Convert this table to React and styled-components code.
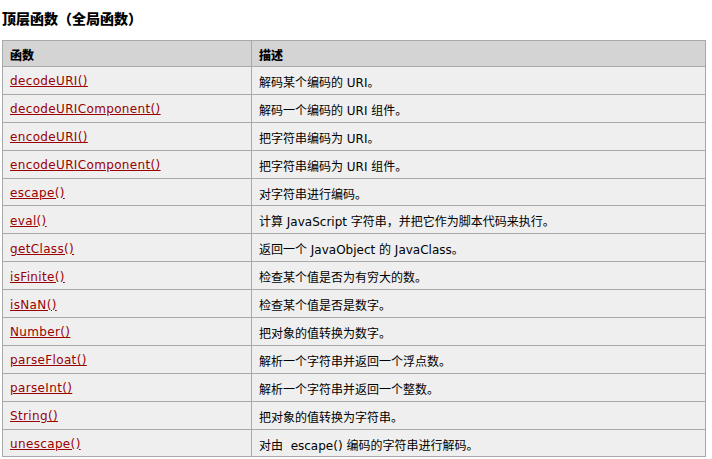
import React from "react";
import styled, { createGlobalStyle } from "styled-components";

const Global = createGlobalStyle`
  body {
    margin: 0;
    background: #fff;
    font-family: "DejaVu Sans", Verdana, "Noto Sans CJK SC", sans-serif;
    font-size: 12px;
    color: #000;
  }
`;

const Page = styled.div`
  padding: 0 6px 0 2px;
`;

const Title = styled.h2`
  margin: 0;
  height: 40px;
  line-height: 37px;
  font-size: 14px;
  font-weight: 900;
  font-family: "Noto Sans CJK SC", sans-serif;
`;

const Table = styled.table`
  width: 704px;
  border-collapse: collapse;
  background: #efefef;
  border: 1px solid #a9a9a9;
`;

const Th = styled.th`
  height: 24px;
  padding: 1px 7px 0;
  text-align: left;
  font-weight: 900;
  background: #d4d4d4;
  border: 1px solid #a9a9a9;
  font-family: "Noto Sans CJK SC", sans-serif;
  font-size: 12px;
  width: ${(p) => p.w || "auto"};
`;

const Row = styled.tr`
  height: 27.9px;
`;

const Td = styled.td`
  padding: 2px 7px 0;
  border: 1px solid #a9a9a9;
  white-space: nowrap;
`;

const Link = styled.a`
  color: #900;
  text-decoration: underline;
  letter-spacing: 0.35px;
`;

const rows = [
  ["decodeURI()", "解码某个编码的 URI。"],
  ["decodeURIComponent()", "解码一个编码的 URI 组件。"],
  ["encodeURI()", "把字符串编码为 URI。"],
  ["encodeURIComponent()", "把字符串编码为 URI 组件。"],
  ["escape()", "对字符串进行编码。"],
  ["eval()", "计算 JavaScript 字符串，并把它作为脚本代码来执行。"],
  ["getClass()", "返回一个 JavaObject 的 JavaClass。"],
  ["isFinite()", "检查某个值是否为有穷大的数。"],
  ["isNaN()", "检查某个值是否是数字。"],
  ["Number()", "把对象的值转换为数字。"],
  ["parseFloat()", "解析一个字符串并返回一个浮点数。"],
  ["parseInt()", "解析一个字符串并返回一个整数。"],
  ["String()", "把对象的值转换为字符串。"],
  ["unescape()", "对由 \u00a0escape() 编码的字符串进行解码。"],
];

export default function App() {
  return (
    <Page>
      <Global />
      <Title>顶层函数（全局函数）</Title>
      <Table>
        <thead>
          <tr>
            <Th w="234px">函数</Th>
            <Th>描述</Th>
          </tr>
        </thead>
        <tbody>
          {rows.map(([fn, desc]) => (
            <Row key={fn}>
              <Td>
                <Link href="#">{fn}</Link>
              </Td>
              <Td>{desc}</Td>
            </Row>
          ))}
        </tbody>
      </Table>
    </Page>
  );
}
